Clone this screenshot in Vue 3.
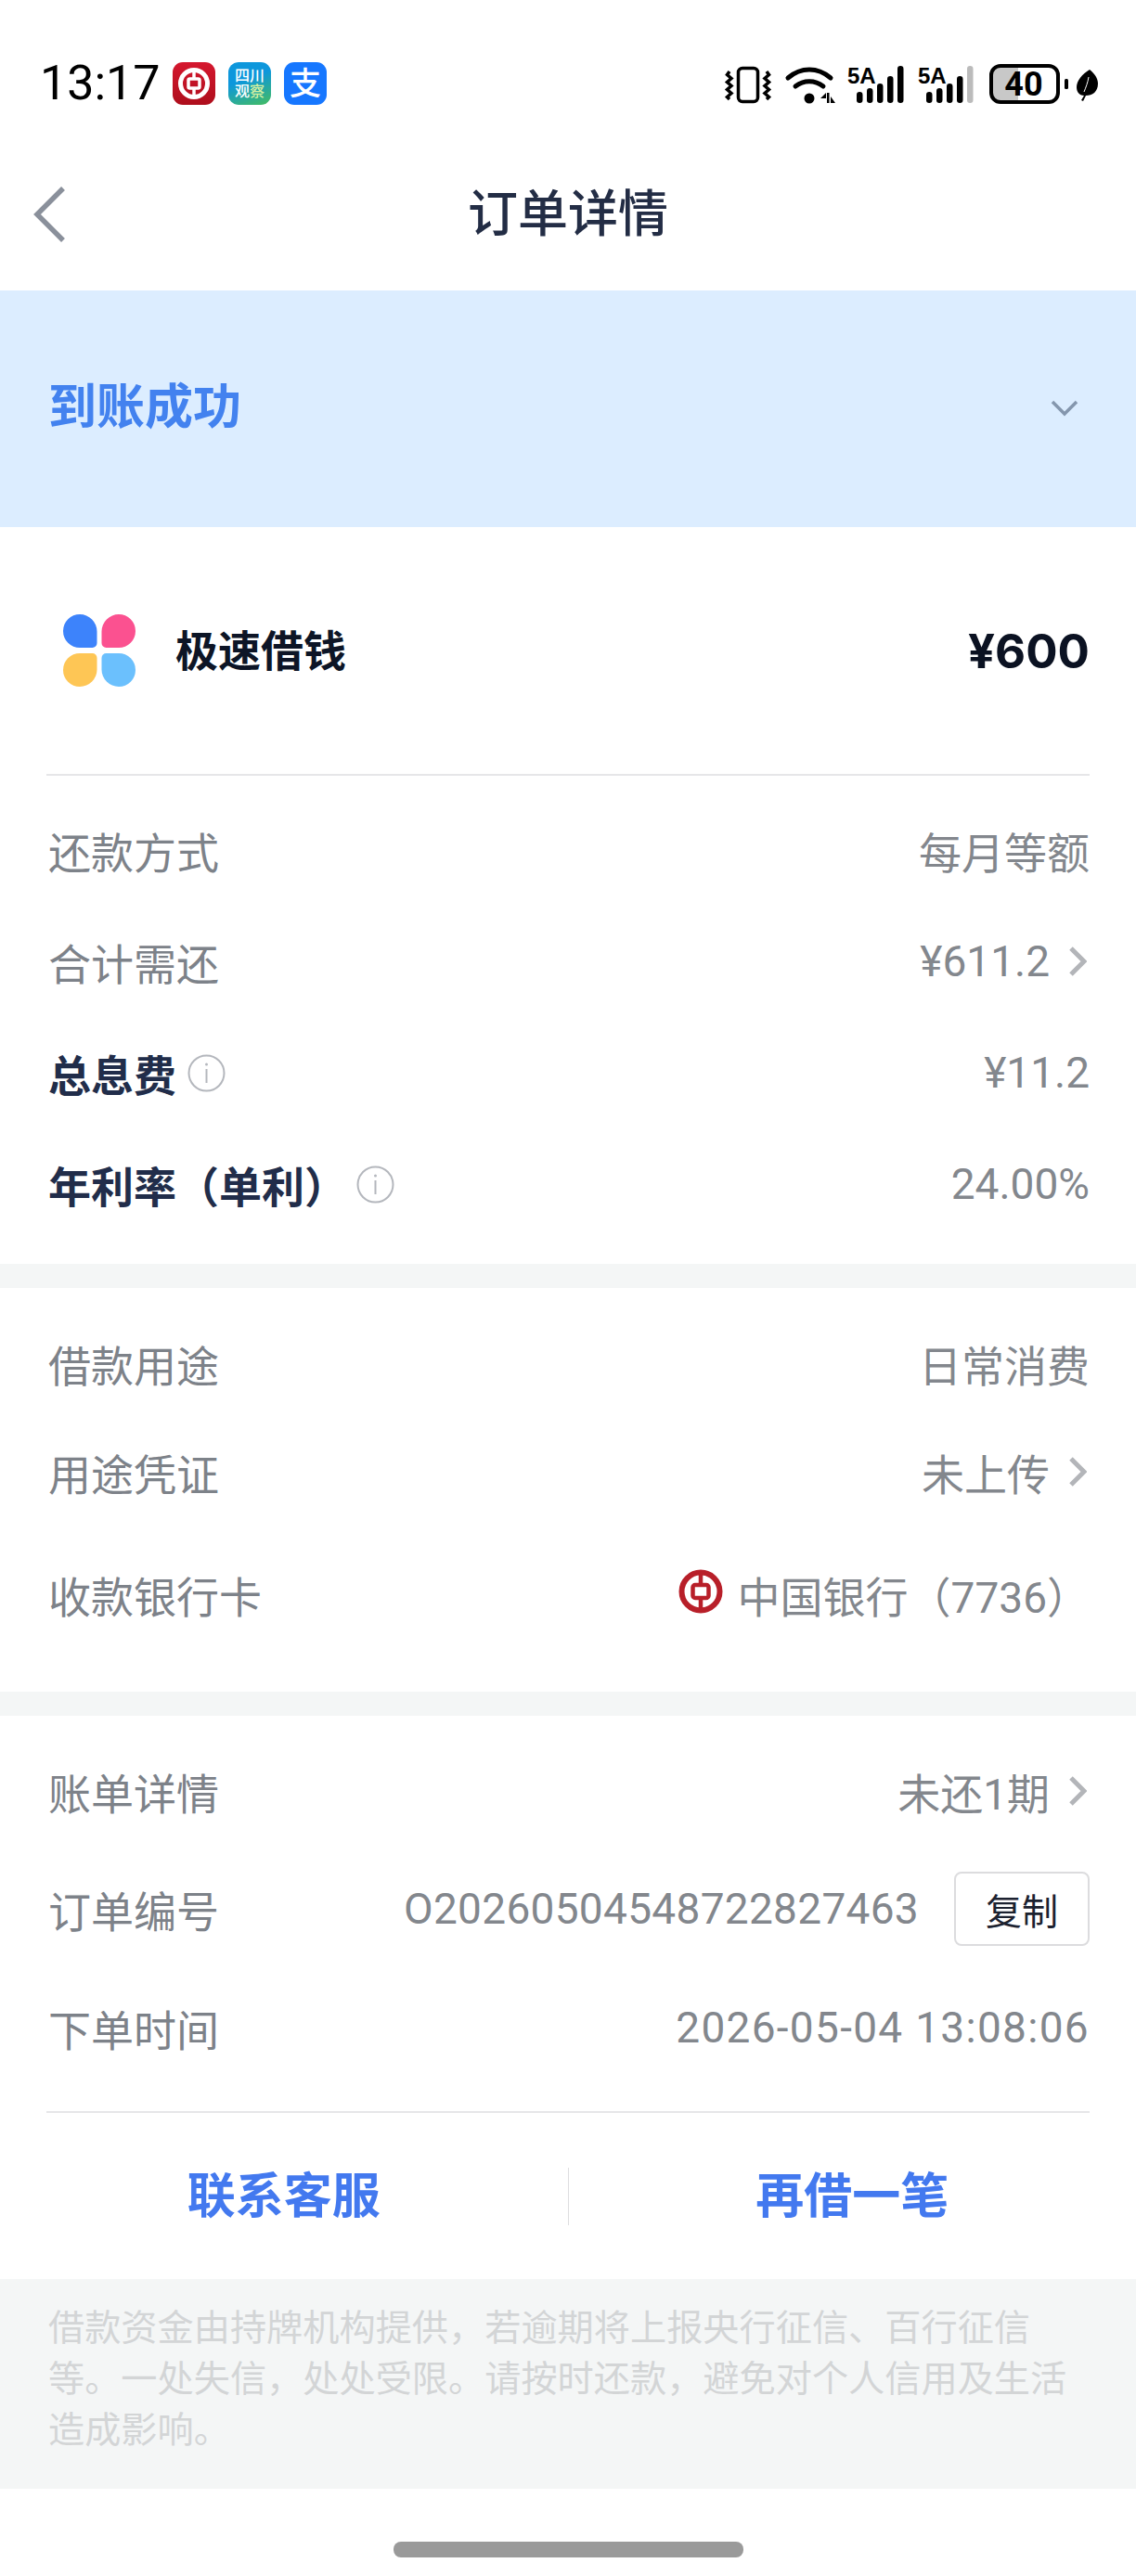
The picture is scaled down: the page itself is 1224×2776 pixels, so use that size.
<template>
  <div class="page">
    <div class="status-bar">
      <div class="status-left">
        <span class="clock">13:17</span>
        <span class="app-icon app-icon--boc">
          <svg width="46" height="46" viewBox="0 0 46 46">
            <circle cx="23" cy="23" r="14.5" fill="none" stroke="#fff" stroke-width="5" />
            <rect x="17" y="18" width="12" height="10" rx="1.5" fill="none" stroke="#fff" stroke-width="3.5" />
            <path d="M23 8v10M23 28v10" stroke="#fff" stroke-width="3.5" />
          </svg>
        </span>
        <span class="app-icon app-icon--sc">
          <span>四川</span>
          <span class="sc-bottom">观<i>察</i></span>
        </span>
        <span class="app-icon app-icon--ali">
          <span>支</span>
        </span>
      </div>
      <svg class="status-right" width="404" height="56" viewBox="0 -6 404 56">
        <!-- vibrate -->
        <rect x="15.500" y="3.500" width="21" height="36" rx="4.500" fill="none" stroke="#000" stroke-width="3.500" />
        <path d="M6 7L3.500 10.500 8 14.500 3.500 18.500 8 22.500 3.500 26.500 8 30.500 3.500 34.500 6 37M46 7l2.500 3.500-4.500 4 4.500 4-4.500 4 4.500 4-4.500 4 4.500 4-2.500 2.500" fill="none" stroke="#000" stroke-width="3.500" />
        <!-- wifi -->
        <path d="M69 14c14-12 32-12 46 0" fill="none" stroke="#000" stroke-width="5" stroke-linecap="round" />
        <path d="M77 23c9-7 21-7 30 0" fill="none" stroke="#000" stroke-width="5" stroke-linecap="round" />
        <circle cx="92" cy="36" r="5.500" fill="#000" />
        <path d="M110 30l-6 6 6 0zM111 30h2.500v11H111zM115 41V34l5 7z" fill="#000" />
        <!-- sim 1 -->
        <text x="133" y="20" class="net">5A</text>
        <rect x="143" y="29" width="6.500" height="12" rx="3.200" />
        <rect x="154" y="25" width="6.500" height="16" rx="3.200" />
        <rect x="165" y="20" width="6.500" height="21" rx="3.200" />
        <rect x="176" y="12" width="6.500" height="29" rx="3.200" />
        <rect x="187" y="1" width="6.500" height="40" rx="3.200" />
        <!-- sim 2 -->
        <text x="209" y="20" class="net">5A</text>
        <rect x="218" y="29" width="6.500" height="12" rx="3.200" />
        <rect x="229" y="25" width="6.500" height="16" rx="3.200" />
        <rect x="240" y="20" width="6.500" height="21" rx="3.200" />
        <rect x="251" y="12" width="6.500" height="29" rx="3.200" />
        <rect x="262" y="1" width="6.500" height="40" rx="3.200" fill="#bbb" />
        <!-- battery -->
        <path d="M296 1h21v39h-21a8 8 0 0 1-8-8V9a8 8 0 0 1 8-8z" fill="#c8c8c8" />
        <rect x="288" y="1" width="72" height="39" rx="10" fill="none" stroke="#000" stroke-width="4" />
        <text x="323" y="33" class="batt" text-anchor="middle">40</text>
        <rect x="367" y="15" width="4" height="11" rx="1.500" />
        <!-- leaf -->
        <path d="M394 5c-8 5-14 12-14 19 0 6 4 9 8 9l-3 5 2 1 3-6c7 0 13-4 13-13 0-6-4-11-9-15z" />
        <path d="M393 13c-1 6-3 11-5 16" fill="none" stroke="#fff" stroke-width="1" />
      </svg>
    </div>

    <header class="nav">
      <svg class="nav__back" width="40" height="64" viewBox="0 0 40 64">
        <path d="M35 4L7 32l28 28" fill="none" stroke="#8a909b" stroke-width="5.500" />
      </svg>
      <h1 class="nav__title">订单详情</h1>
    </header>

    <section class="banner">
      <span class="banner__text">到账成功</span>
      <svg width="30" height="20" viewBox="0 0 30 20">
        <path d="M2 2l13 13L28 2" fill="none" stroke="#8496ad" stroke-width="3.500" />
      </svg>
    </section>

    <section class="summary">
      <div class="summary__top">
        <div class="product">
          <svg class="product__logo" width="80" height="80" viewBox="0 0 80 80">
            <path d="M19 1a18.500 18.500 0 0 1 18.500 18.500V32a5 5 0 0 1-5 5H19A18 18 0 0 1 19 1z" fill="#3d83fb" />
            <path d="M61 1a18.500 18.500 0 0 0-18.500 18.500V32a5 5 0 0 0 5 5H61A18 18 0 0 0 61 1z" fill="#fb5190" />
            <path d="M19 79a18.500 18.500 0 0 0 18.500-18.500V48a5 5 0 0 0-5-5H19a18 18 0 0 0 0 36z" fill="#fec655" />
            <path d="M61 79a18.500 18.500 0 0 1-18.500-18.500V48a5 5 0 0 1 5-5H61a18 18 0 0 1 0 36z" fill="#6bc0fd" />
          </svg>
          <span class="product__name">极速借钱</span>
        </div>
        <span class="product__amount">¥600</span>
      </div>
    </section>

    <section class="group group--first">
      <div v-for="row in loanRows" :key="row.label" class="row">
        <div class="row__label" :class="{ 'row__label--strong': row.info }">
          <span>{{ row.label }}</span>
          <svg v-if="row.info" class="info" :class="{ 'info--far': row.far }" width="41" height="41" viewBox="0 0 41 41">
            <circle cx="20.500" cy="20.500" r="19" fill="none" stroke="#b4b7bd" stroke-width="2" />
            <circle cx="20.500" cy="11" r="1.500" fill="#b4b7bd" />
            <path d="M20.500 16v15" stroke="#b4b7bd" stroke-width="2" />
          </svg>
        </div>
        <div class="row__value">
          <span>{{ row.value }}</span>
          <svg v-if="row.arrow" class="arrow" width="20" height="32" viewBox="0 0 20 32">
            <path d="M3 2l14 14L3 30" fill="none" stroke="#b3b5b9" stroke-width="5" />
          </svg>
        </div>
      </div>
    </section>

    <section class="group group--middle">
      <div class="row">
        <span class="row__label">借款用途</span>
        <div class="row__value">日常消费</div>
      </div>
      <div class="row">
        <span class="row__label">用途凭证</span>
        <div class="row__value">
          <span>未上传</span>
          <svg class="arrow" width="20" height="32" viewBox="0 0 20 32">
            <path d="M3 2l14 14L3 30" fill="none" stroke="#b3b5b9" stroke-width="5" />
          </svg>
        </div>
      </div>
      <div class="row row--bank">
        <span class="row__label">收款银行卡</span>
        <div class="row__value row__value--bank">
          <svg width="48" height="48" viewBox="0 0 48 48">
            <circle cx="24" cy="24" r="20.500" fill="none" stroke="#b81f29" stroke-width="6" />
            <rect x="15.500" y="17" width="17" height="14" rx="2.500" fill="none" stroke="#b81f29" stroke-width="4.500" />
            <path d="M24 4v13M24 31v13" stroke="#b81f29" stroke-width="4.500" />
          </svg>
          <span>中国银行（7736）</span>
        </div>
      </div>
    </section>

    <section class="group group--last">
      <div class="row">
        <span class="row__label">账单详情</span>
        <div class="row__value">
          <span>未还1期</span>
          <svg class="arrow" width="20" height="32" viewBox="0 0 20 32">
            <path d="M3 2l14 14L3 30" fill="none" stroke="#b3b5b9" stroke-width="5" />
          </svg>
        </div>
      </div>
      <div class="row row--order">
        <span class="row__label">订单编号</span>
        <div class="row__value">
          <span class="order-no">O20260504548722827463</span>
          <button class="copy" type="button">复制</button>
        </div>
      </div>
      <div class="row row--time">
        <span class="row__label">下单时间</span>
        <div class="row__value row__value--time">2026-05-04 13:08:06</div>
      </div>
    </section>

    <div class="rule"></div>
    <section class="actions">
      <span class="actions__btn">联系客服</span>
      <span class="actions__sep"></span>
      <span class="actions__btn">再借一笔</span>
    </section>

    <p class="notice">借款资金由持牌机构提供，若逾期将上报央行征信、百行征信等。一处失信，处处受限。请按时还款，避免对个人信用及生活造成影响。</p>

    <div class="home-area">
      <span class="home-bar"></span>
    </div>
  </div>
</template>

<script setup>
const loanRows = [
  { label: '还款方式', value: '每月等额' },
  { label: '合计需还', value: '¥611.2', arrow: true },
  { label: '总息费', value: '¥11.2', info: true },
  { label: '年利率（单利）', value: '24.00%', info: true, far: true }
]
</script>

<style>
html,
body {
  margin: 0;
  background: #fff;
}
</style>

<style scoped>
.page {
  width: 1224px;
  height: 2776px;
  overflow: hidden;
  background: #fff;
  font-family: Roboto, "Noto Sans CJK SC", sans-serif;
}

.status-bar {
  height: 160px;
  box-sizing: border-box;
  padding: 67px 40px 0 43px;
  display: flex;
  justify-content: space-between;
  align-items: flex-start;
}

.status-left {
  display: flex;
  align-items: center;
  height: 46px;
}

.clock {
  font-size: 52px;
  line-height: 46px;
  color: #000;
  width: 143px;
}

.app-icon {
  width: 46px;
  height: 46px;
  border-radius: 11px;
  margin-right: 14px;
  color: #fff;
  display: flex;
  flex-direction: column;
  align-items: center;
  justify-content: center;
  overflow: hidden;
}

.app-icon--boc {
  background: linear-gradient(#d5172e, #ae0e1c);
}

.app-icon--sc {
  background: linear-gradient(160deg, #0d97dc 40%, #45bd5f);
  font-size: 16px;
  line-height: 17px;
  font-weight: 500;
}

.sc-bottom i {
  font-style: normal;
  color: #d5f0a0;
}

.app-icon--ali {
  background: #1677ff;
  font-size: 34px;
  font-weight: 500;
  line-height: 46px;
}

.status-right {
  margin-top: -3px;
  fill: #000;
}

.net {
  font-family: "Liberation Sans", sans-serif;
  font-size: 24px;
  font-weight: 700;
}

.batt {
  font-family: Roboto, sans-serif;
  font-size: 36px;
  font-weight: 700;
}

.nav {
  position: relative;
  height: 153px;
  display: flex;
  align-items: center;
  justify-content: center;
}

.nav__back {
  position: absolute;
  left: 33px;
  top: 39px;
}

.nav__title {
  margin: 0 0 20px;
  font-size: 54px;
  font-weight: 500;
  color: #232d45;
}

.banner {
  height: 255px;
  background: #dcedff;
  display: flex;
  align-items: center;
  justify-content: space-between;
  padding: 0 62px 0 52px;
}

.banner__text {
  font-size: 52px;
  font-weight: 700;
  color: #4382ef;
  margin-bottom: 12px;
}

.summary {
  padding: 0 50px;
}

.summary__top {
  height: 268px;
  border-bottom: 2px solid #e6e6e8;
  display: flex;
  align-items: center;
  justify-content: space-between;
  box-sizing: border-box;
}

.product {
  display: flex;
  align-items: center;
}

.product__logo {
  margin-left: 17px;
  margin-right: 42px;
}

.product__name {
  font-size: 46px;
  font-weight: 700;
  color: #0d1526;
  margin-bottom: 6px;
}

.product__amount {
  font-family: Inter, "Noto Sans CJK SC", sans-serif;
  font-size: 51px;
  font-weight: 700;
  color: #0b1222;
}

.group {
  padding: 24px 50px 28px 52px;
  border-bottom: 26px solid #f4f6f6;
}

.group--first {
  padding-top: 22px;
  padding-bottom: 24px;
}

.group--middle {
  padding-bottom: 29px;
}

.group--last {
  border-bottom: 0;
}

.row {
  height: 118px;
  box-sizing: border-box;
  padding-bottom: 4px;
  display: flex;
  align-items: center;
  justify-content: space-between;
  font-size: 46px;
  color: #7d8289;
}

.group--first .row {
  height: 120px;
}

.group--middle .row {
  height: 117px;
}

.group--middle .row--bank {
  height: 148px;
}

.row--order {
  height: 136px;
}

.row--time {
  height: 120px;
}

.row__label {
  display: flex;
  align-items: center;
  color: #7d8289;
}

.row__label--strong {
  font-weight: 700;
  color: #212d4a;
}

.row__value {
  display: flex;
  align-items: center;
  color: #83878d;
}

.row__value--bank svg {
  margin-bottom: 6px;
}

.row__value--bank span {
  margin-left: 16px;
}

.row__value--time {
  letter-spacing: 1.3px;
}

.order-no {
  letter-spacing: 0.3px;
}

.info {
  margin-left: 12px;
}

.info--far {
  margin-left: 10px;
}

.arrow {
  margin-left: 20px;
  margin-right: 3px;
}

.copy {
  width: 146px;
  height: 80px;
  margin-left: 38px;
  padding: 0;
  background: #fff;
  border: 2px solid #dcdcde;
  border-radius: 8px;
  font-family: inherit;
  font-size: 39px;
  color: #1c2230;
}

.rule {
  height: 2px;
  margin: 0 50px;
  background: #e6e6e8;
}

.actions {
  height: 179px;
  display: flex;
  align-items: center;
}

.actions__btn {
  flex: 1;
  text-align: center;
  font-size: 52px;
  font-weight: 700;
  color: #4379ef;
  margin-bottom: 9px;
}

.actions__sep {
  width: 1px;
  height: 62px;
  background: #dedee0;
}

.notice {
  margin: 0;
  height: 226px;
  box-sizing: border-box;
  padding: 26px 60px 0 52px;
  background: #f4f6f6;
  font-size: 39.2px;
  line-height: 55px;
  color: #d3d5d6;
}

.home-area {
  display: flex;
  justify-content: center;
  padding-top: 57px;
}

.home-bar {
  width: 377px;
  height: 17px;
  border-radius: 8px;
  background: #9a9a9a;
}
</style>
